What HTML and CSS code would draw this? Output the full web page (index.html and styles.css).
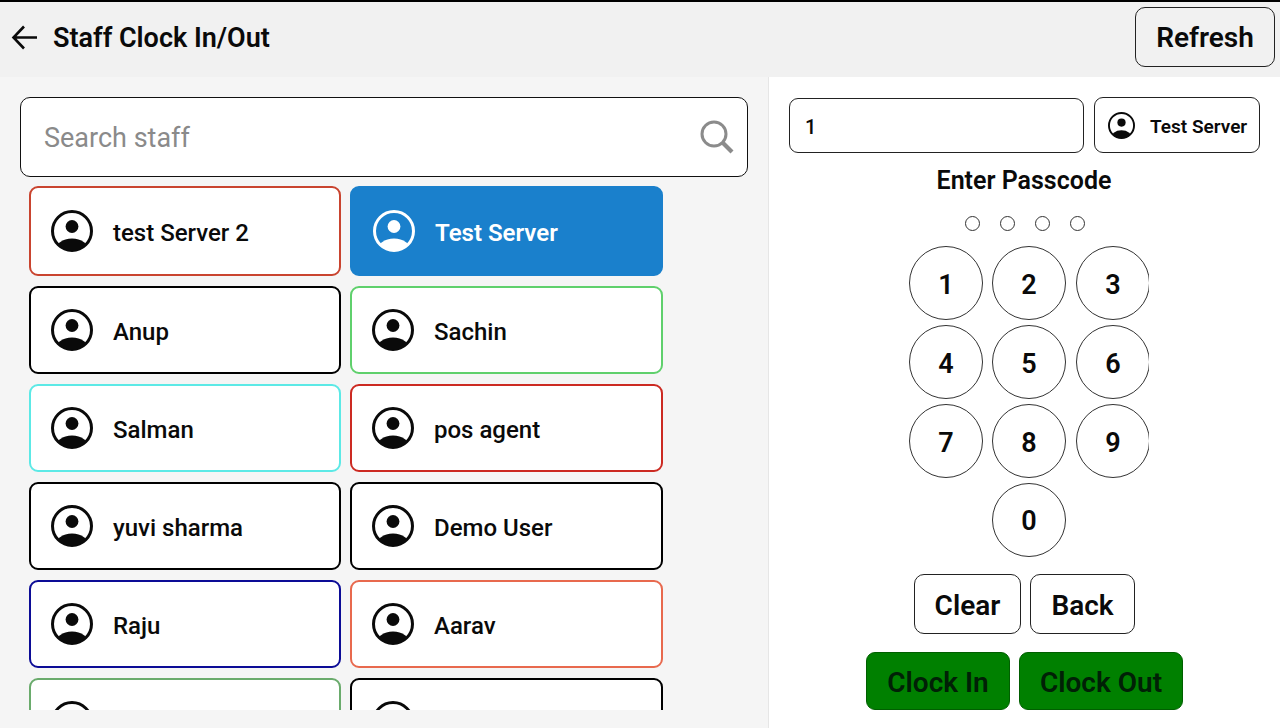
FILE: index.html
```html
<!DOCTYPE html>
<html lang="en">
<head>
<meta charset="utf-8">
<title>Staff Clock In/Out</title>
<link rel="stylesheet" href="styles.css">
</head>
<body>
<svg class="defs" width="0" height="0" aria-hidden="true">
  <defs>
    <clipPath id="disc"><circle cx="21" cy="21" r="20"/></clipPath>
    <symbol id="avatar" viewBox="0 0 42 42">
      <circle cx="21" cy="21" r="19.5" fill="none" stroke="currentColor" stroke-width="3"/>
      <circle cx="21" cy="16.5" r="6.4" fill="currentColor"/>
      <ellipse cx="21" cy="41" rx="17" ry="12.5" fill="currentColor" clip-path="url(#disc)"/>
    </symbol>
  </defs>
</svg>
<header class="topbar">
  <div class="title-group">
    <svg class="back-icon" viewBox="0 0 28 28" fill="none" stroke="currentColor" stroke-width="2.6"><path d="M26 13.5H2.5M13 2.5 2.5 13.5 13 24.5"/></svg>
    <h1 class="title">Staff Clock In/Out</h1>
  </div>
  <button class="refresh">Refresh</button>
</header>
<main class="main">
  <section class="staff-panel">
    <div class="search">
      <span class="search-placeholder">Search staff</span>
      <svg class="search-icon" viewBox="0 0 34 34" fill="none" stroke="currentColor" stroke-width="3"><circle cx="14" cy="14" r="12"/><path d="M22.5 22.5 32 32" stroke-width="4.2"/></svg>
    </div>
    <div class="staff-list">
      <div class="staff-card tall c-red"><svg class="avatar"><use href="#avatar"/></svg><span>test Server 2</span></div>
      <div class="staff-card tall selected"><svg class="avatar"><use href="#avatar"/></svg><span>Test Server</span></div>
      <div class="staff-card c-black"><svg class="avatar"><use href="#avatar"/></svg><span>Anup</span></div>
      <div class="staff-card c-green"><svg class="avatar"><use href="#avatar"/></svg><span>Sachin</span></div>
      <div class="staff-card c-cyan"><svg class="avatar"><use href="#avatar"/></svg><span>Salman</span></div>
      <div class="staff-card c-crimson"><svg class="avatar"><use href="#avatar"/></svg><span>pos agent</span></div>
      <div class="staff-card c-black"><svg class="avatar"><use href="#avatar"/></svg><span>yuvi sharma</span></div>
      <div class="staff-card c-black"><svg class="avatar"><use href="#avatar"/></svg><span>Demo User</span></div>
      <div class="staff-card c-navy"><svg class="avatar"><use href="#avatar"/></svg><span>Raju</span></div>
      <div class="staff-card c-coral"><svg class="avatar"><use href="#avatar"/></svg><span>Aarav</span></div>
      <div class="staff-card c-sage"><svg class="avatar"><use href="#avatar"/></svg><span></span></div>
      <div class="staff-card c-black"><svg class="avatar"><use href="#avatar"/></svg><span></span></div>
    </div>
  </section>
  <section class="pin-panel">
    <div class="id-row">
      <div class="id-input">1</div>
      <button class="current-staff"><svg class="avatar-small"><use href="#avatar"/></svg><span>Test Server</span></button>
    </div>
    <h2 class="passcode-title">Enter Passcode</h2>
    <div class="dots"><i></i><i></i><i></i><i></i></div>
    <div class="keypad">
      <button>1</button><button>2</button><button>3</button>
      <button>4</button><button>5</button><button>6</button>
      <button>7</button><button>8</button><button>9</button>
      <button class="zero">0</button>
    </div>
    <div class="edit-row">
      <button class="clear">Clear</button>
      <button class="back">Back</button>
    </div>
    <div class="clock-row">
      <button class="clock-in">Clock In</button>
      <button class="clock-out">Clock Out</button>
    </div>
  </section>
</main>
</body>
</html>
```
FILE: styles.css
```css
* { box-sizing: border-box; }
html, body { margin: 0; height: 728px; overflow: hidden; }
body {
  font-family: Roboto, "Liberation Sans", sans-serif;
  color: #0a0a0a;
  background: #f5f5f5;
  border-top: 2px solid #000;
  display: flex;
  flex-direction: column;
}
button { font-family: inherit; color: inherit; cursor: pointer; padding: 0; }
.defs { position: absolute; }

.topbar {
  height: 75px;
  flex: none;
  background: #f1f1f1;
  display: flex;
  align-items: flex-start;
  justify-content: space-between;
  padding: 5px 5px 0 11px;
}
.title-group { display: flex; align-items: center; height: 60px; gap: 14px; }
.back-icon { width: 28px; height: 28px; margin-top: 1px; }
.title { margin: 2px 0 0; font-size: 27px; font-weight: 600; }
.refresh {
  width: 140px; height: 60px;
  background: #f1f1f1;
  border: 1.5px solid #222;
  border-radius: 10px;
  font-size: 28px;
  font-weight: 600;
}

.main { flex: 1; display: flex; min-height: 0; }

.staff-panel {
  width: 768px;
  flex: none;
  padding: 20px 20px 18px;
  display: flex;
  flex-direction: column;
}
.search {
  height: 80px;
  flex: none;
  background: #fff;
  border: 1.5px solid #111;
  border-radius: 10px;
  display: flex;
  align-items: center;
  justify-content: space-between;
  padding: 0 13px 0 23px;
}
.search-placeholder { font-size: 27px; color: #8a8a8a; padding-top: 2px; }
.search-icon { width: 34px; height: 34px; color: #8b8b8b; }

.staff-list {
  flex: 1;
  min-height: 0;
  overflow: hidden;
  margin-top: 9px;
  padding-left: 9px;
  display: grid;
  grid-template-columns: 312px 313px;
  grid-template-rows: 90px;
  grid-auto-rows: 88px;
  column-gap: 9px;
  row-gap: 10px;
  align-content: start;
}
.staff-card {
  height: 88px;
  background: #fff;
  border: 2px solid #000;
  border-radius: 9px;
  display: flex;
  align-items: center;
  gap: 20px;
  padding-left: 20px;
  font-size: 24px;
  font-weight: 500;
}
.staff-card span { padding-top: 4px; }
.staff-card.tall { height: 90px; }
.avatar { width: 42px; height: 42px; flex: none; }
.c-red { border-color: #c9442f; }
.c-black { border-color: #000; }
.c-green { border-color: #5fd06c; }
.c-cyan { border-color: #5ce9e6; }
.c-crimson { border-color: #cc2a22; }
.c-navy { border-color: #0c0c96; }
.c-coral { border-color: #e8694e; }
.c-sage { border-color: #6aab6c; }
.selected { background: #1a80cc; border-color: #1a80cc; color: #fff; font-weight: 600; padding-left: 21px; }

.pin-panel {
  flex: 1;
  background: #fff;
  border-left: 1px solid #e6e6e6;
  padding: 20px 0 0 20px;
  display: flex;
  flex-direction: column;
  align-items: flex-start;
}
.id-row { display: flex; gap: 10px; align-items: flex-end; height: 56px; }
.id-input {
  width: 295px; height: 55px;
  border: 1.5px solid #222;
  border-radius: 9px;
  display: flex;
  align-items: center;
  padding: 2px 0 0 15px;
  font-size: 20px;
  font-weight: 500;
}
.current-staff {
  width: 166px; height: 56px;
  background: #fff;
  border: 1.5px solid #222;
  border-radius: 9px;
  display: flex;
  align-items: center;
  gap: 15px;
  padding-left: 13px;
  font-size: 19px;
  font-weight: 600;
  white-space: nowrap;
}
.current-staff span { padding-top: 3px; }
.avatar-small { width: 27px; height: 27px; flex: none; }

.passcode-title {
  width: 470px;
  margin: 14px 0 0;
  text-align: center;
  font-size: 25px;
  font-weight: 600;
  line-height: 28px;
}
.dots { width: 472px; display: flex; justify-content: center; gap: 20px; margin-top: 21px; }
.dots i { width: 15px; height: 15px; border: 1.5px solid #333; border-radius: 50%; }

.keypad {
  width: 240px;
  margin: 15px 0 0 120px;
  overflow: hidden;
  display: grid;
  grid-template-columns: 83px 84px 73px;
  row-gap: 5px;
}
.keypad button {
  width: 74px; height: 74px;
  background: #fff;
  border: 1.2px solid #333;
  border-radius: 50%;
  padding-top: 3px;
  font-size: 27px;
  font-weight: 600;
}
.keypad .zero { grid-column: 2; padding-top: 1px; }

.edit-row { display: flex; gap: 9px; margin: 17px 0 0 125px; }
.edit-row button {
  height: 60px;
  background: #fff;
  border: 1.5px solid #222;
  border-radius: 10px;
  padding-top: 2px;
  font-size: 28px;
  font-weight: 600;
}
.clear { width: 107px; }
.back { width: 105px; }

.clock-row { display: flex; gap: 9px; margin: 18px 0 0 77px; }
.clock-row button {
  height: 58px;
  background: #008000;
  border: 1.5px solid #005f00;
  border-radius: 9px;
  padding-top: 3px;
  font-size: 28px;
  font-weight: 600;
  color: #012006;
}
.clock-in { width: 144px; }
.clock-out { width: 164px; }
```
